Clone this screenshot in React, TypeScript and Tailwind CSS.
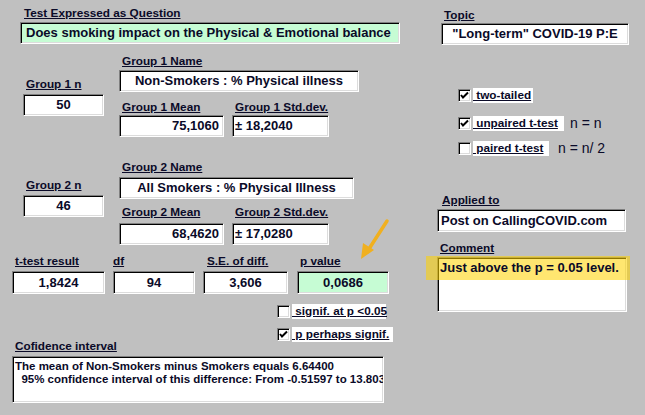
import React from "react";

const box =
  "border border-t-[#808080] border-l-[#808080] border-r-white border-b-white shadow-[inset_1px_1px_0_#000,inset_-1px_-1px_0_#dcdcdc]";

function Label({ children, className = "" }: { children: React.ReactNode; className?: string }) {
  return (
    <div className={"text-[11.75px] leading-[12px] font-bold underline underline-offset-[1px] whitespace-nowrap " + className}>
      {children}
    </div>
  );
}

function Check({ checked }: { checked: boolean }) {
  return (
    <div className={"w-[13px] h-[13px] bg-white shrink-0 flex items-center justify-center " + box}>
      {checked && (
        <svg width="9" height="9" viewBox="0 0 9 9">
          <path d="M1 4 L3 6.5 L8 1.5" stroke="#000" strokeWidth="2" fill="none" />
        </svg>
      )}
    </div>
  );
}

function CheckRow({ checked, text, w }: { checked: boolean; text: string; w: string }) {
  return (
    <div className="flex items-center h-[14px]">
      <Check checked={checked} />
      <div className={"ml-[2px] h-[15px] bg-white text-[11.75px] leading-[14px] font-bold underline whitespace-nowrap " + w}>
        {"\u00a0" + text}
      </div>
    </div>
  );
}

export default function App() {
  return (
    <div
      className="w-[645px] h-[415px] bg-[#c0c0c0] relative overflow-hidden flex text-[#0a0a28]"
      style={{ fontFamily: '"Liberation Sans", Arial, sans-serif' }}
    >
      {/* Left column */}
      <div className="w-[400px] flex flex-col shrink-0">
        <div className="ml-[20px] mt-[7px]">
          <Label className="ml-[4px]">Test Expressed as Question</Label>
          <div className={"mt-[3px] w-[380px] h-[22px] bg-[#c6fcd4] text-[13px] font-bold leading-[20px] pl-[5px] whitespace-nowrap " + box}>
            Does smoking impact on the Physical &amp; Emotional balance
          </div>
        </div>

        {/* Group 1 */}
        <div className="flex mt-[11px]">
          <div className="ml-[23px] w-[81px] mt-[23px]">
            <Label className="ml-[3px]">Group 1 n</Label>
            <div className={"mt-[4px] h-[22px] bg-white text-[13px] font-bold leading-[20px] text-center " + box}>50</div>
          </div>
          <div className="ml-[15px]">
            <Label className="ml-[3px]">Group 1 Name</Label>
            <div className={"mt-[3px] w-[240px] h-[22px] bg-white text-[13px] font-bold leading-[20px] text-center whitespace-nowrap " + box}>
              Non-Smokers : % Physical illness
            </div>
            <div className="flex mt-[9px]">
              <div className="w-[105px]">
                <Label className="ml-[3px]">Group 1 Mean</Label>
                <div className={"mt-[2px] h-[22px] bg-white text-[13px] font-bold leading-[20px] text-right pr-[4px] " + box}>75,1060</div>
              </div>
              <div className="ml-[8px] w-[97px]">
                <Label className="ml-[3px]">Group 1 Std.dev.</Label>
                <div className={"mt-[2px] h-[22px] bg-white text-[13px] font-bold leading-[20px] pl-[2px] " + box}>± 18,2040</div>
              </div>
            </div>
          </div>
        </div>

        {/* Group 2 */}
        <div className="flex mt-[24px]">
          <div className="ml-[23px] w-[81px] mt-[18px]">
            <Label className="ml-[3px]">Group 2 n</Label>
            <div className={"mt-[4px] h-[22px] bg-white text-[13px] font-bold leading-[20px] text-center " + box}>46</div>
          </div>
          <div className="ml-[15px]">
            <Label className="ml-[3px]">Group 2 Name</Label>
            <div className={"mt-[4px] w-[235px] h-[22px] bg-white text-[13px] font-bold leading-[20px] text-center whitespace-nowrap " + box}>
              All Smokers : % Physical Illness
            </div>
            <div className="flex mt-[7px]">
              <div className="w-[105px]">
                <Label className="ml-[3px]">Group 2 Mean</Label>
                <div className={"mt-[5px] h-[22px] bg-white text-[13px] font-bold leading-[20px] text-right pr-[4px] " + box}>68,4620</div>
              </div>
              <div className="ml-[8px] w-[97px]">
                <Label className="ml-[3px]">Group 2 Std.dev.</Label>
                <div className={"mt-[5px] h-[22px] bg-white text-[13px] font-bold leading-[20px] pl-[2px] " + box}>± 17,0280</div>
              </div>
            </div>
          </div>
        </div>

        {/* Results */}
        <div className="flex mt-[10px]">
          <div className="ml-[12px] w-[93px]">
            <Label className="ml-[3px]">t-test result</Label>
            <div className={"mt-[4px] h-[23px] bg-white text-[13px] font-bold leading-[21px] text-center " + box}>1,8424</div>
          </div>
          <div className="ml-[8px] w-[82px]">
            <Label className="ml-0">df</Label>
            <div className={"mt-[4px] h-[23px] bg-white text-[13px] font-bold leading-[21px] text-center " + box}>94</div>
          </div>
          <div className="ml-[8px] w-[85px]">
            <Label className="ml-[4px]">S.E. of diff.</Label>
            <div className={"mt-[4px] h-[23px] bg-white text-[13px] font-bold leading-[21px] text-center " + box}>3,606</div>
          </div>
          <div className="ml-[9px] w-[92px]">
            <Label className="ml-[3px]">p value</Label>
            <div className={"mt-[4px] h-[23px] bg-[#c6fcd4] text-[13px] font-bold leading-[21px] text-center " + box}>0,0686</div>
          </div>
        </div>

        <div className="ml-[277px] mt-[10px] flex flex-col gap-[9px]">
          <CheckRow checked={false} text="signif. at p <0.05" w="w-[94px]" />
          <CheckRow checked={true} text="p perhaps signif." w="w-[101px]" />
        </div>

        <Label className="ml-[15px] mt-[-1px]">Cofidence interval</Label>
        <div className={"ml-[12px] mt-[4px] w-[372px] h-[47px] bg-white text-[11.5px] font-bold leading-[13px] pl-[2px] pt-[3px] whitespace-pre overflow-hidden " + box}>
          {"The mean of Non-Smokers minus Smokers equals 6.64400\n  95% confidence interval of this difference: From -0.51597 to 13.8039"}
        </div>
      </div>

      {/* Right column */}
      <div className="flex flex-col">
        <Label className="ml-[44px] mt-[9px]">Topic</Label>
        <div className={"ml-[41px] mt-[2px] w-[188px] h-[22px] bg-white text-[13px] font-bold leading-[20px] text-center whitespace-nowrap " + box}>
          "Long-term" COVID-19 P:E
        </div>

        <div className="ml-[58px] mt-[43px] flex flex-col">
          <CheckRow checked={true} text="two-tailed" w="w-[60px]" />
          <div className="flex items-center mt-[14px]">
            <CheckRow checked={true} text="unpaired t-test" w="w-[91px]" />
            <span className="ml-[6px] text-[14px] leading-[14px]">n = n</span>
          </div>
          <div className="flex items-center mt-[11px]">
            <CheckRow checked={false} text="paired t-test" w="w-[76px]" />
            <span className="ml-[9px] text-[14px] leading-[14px]">n = n/ 2</span>
          </div>
        </div>

        <Label className="ml-[42px] mt-[39px]">Applied to</Label>
        <div className={"ml-[37px] mt-[3px] w-[189px] h-[23px] bg-white text-[13px] font-bold leading-[21px] pl-[3px] whitespace-nowrap " + box}>
          Post on CallingCOVID.com
        </div>

        <Label className="ml-[40px] mt-[10px]">Comment</Label>
        <div className={"ml-[37px] mt-[3px] w-[190px] h-[55px] bg-white text-[13px] font-bold leading-[20px] pl-[2px] whitespace-nowrap " + box}>
          <span className="relative z-10">Just above the p = 0.05 level.</span>
        </div>
      </div>

      {/* Highlight over comment */}
      <div className="absolute left-[426px] top-[256px] w-[204px] h-[24px] bg-[rgba(255,210,0,0.56)] pointer-events-none" />

      {/* Arrow annotation */}
      <svg className="absolute left-[355px] top-[214px]" width="40" height="50" viewBox="0 0 40 50">
        <line x1="32" y1="7" x2="12" y2="38" stroke="#f0b020" strokeWidth="3.5" strokeLinecap="round" />
        <polygon points="6,45 8,29 19,36" fill="#f0b020" />
      </svg>
    </div>
  );
}
